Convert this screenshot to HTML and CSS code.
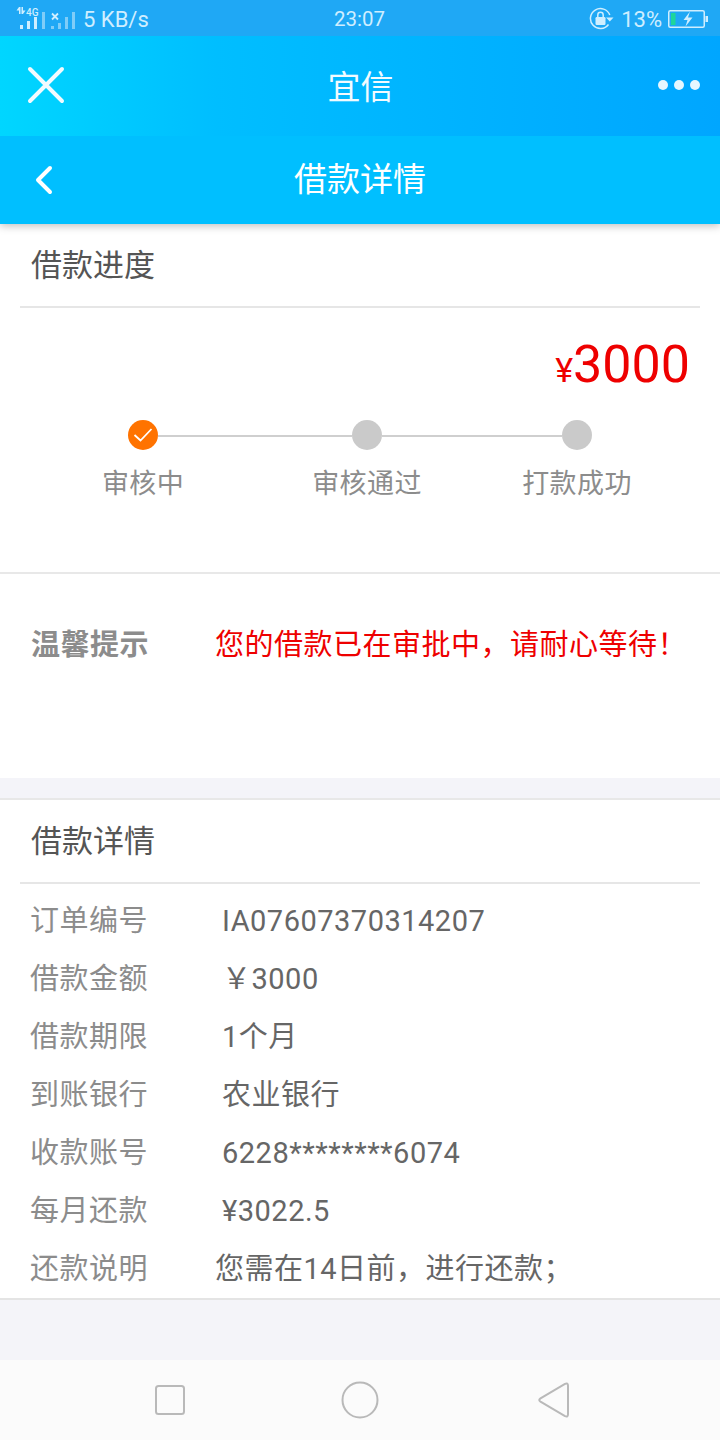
FILE: index.html
```html
<!DOCTYPE html>
<html lang="zh-CN">
<head>
<meta charset="utf-8">
<title>借款详情</title>
<link rel="stylesheet" href="styles.css">
</head>
<body>
<div class="screen">
  <header class="top">
    <div class="status">
      <div class="status-left">
        <svg class="sig" width="76" height="28" viewBox="0 0 76 28">
          <g fill="#cfeeff">
            <rect x="11" y="3" width="1.500" height="7"/><path d="M8.500 6.500l2.500-3.500v3.500z"/>
            <rect x="13.500" y="3" width="1.500" height="7"/><path d="M15 10l2.500-3.500H15z"/>
            <rect x="12" y="21" width="3" height="4"/>
            <rect x="19" y="17" width="3" height="8"/>
            <rect x="26" y="13" width="3" height="12"/>
          </g>
          <rect x="34" y="8" width="3" height="17" fill="#7fcdf8"/>
          <g fill="#7fcdf8">
            <rect x="43" y="22" width="3" height="3"/>
            <rect x="50" y="19" width="3" height="6"/>
            <rect x="57" y="13" width="3" height="12"/>
            <rect x="64" y="8" width="3" height="17"/>
          </g>
          <path d="M44 9.500l6 6M50 9.500l-6 6" stroke="#cfeeff" stroke-width="1.800" fill="none"/>
        </svg>
        <span class="g4">4G</span>
        <span>5 KB/s</span>
      </div>
      <span class="clock">23:07</span>
      <div class="status-right">
        <svg class="lock" width="25" height="24" viewBox="0 0 25 24">
          <path d="M19.500 17.500A10 10 0 1 1 20.800 8" fill="none" stroke="#cfeeff" stroke-width="1.500"/>
          <path d="M17 10.500h7.500l-3.700 4z" fill="#cfeeff"/>
          <rect x="6.500" y="10" width="10" height="8" rx="1.200" fill="#cfeeff"/>
          <path d="M8.800 10V8a2.700 2.700 0 0 1 5.400 0v2" fill="none" stroke="#cfeeff" stroke-width="1.500"/>
        </svg>
        <span class="pct">13%</span>
        <svg width="40" height="18" viewBox="0 0 40 18">
          <rect x=".75" y=".75" width="35.500" height="16.500" rx="1.500" fill="none" stroke="#cfeeff" stroke-width="1.500"/>
          <rect x="3" y="3" width="4.500" height="12" fill="#1fd59a"/>
          <rect x="37.500" y="6" width="2.500" height="6" fill="#cfeeff"/>
          <path d="M22 1.500l-6.500 8.500h4l-2 6.500 7-9h-4.500z" fill="#cfeeff"/>
        </svg>
      </div>
    </div>
    <div class="appbar">
      <svg class="close" width="38" height="38" viewBox="0 0 38 38">
        <path d="M3 3l32 32M35 3L3 35" stroke="#f2fbff" stroke-width="4" stroke-linecap="round" fill="none"/>
      </svg>
      <span class="app-title">宜信</span>
      <div class="dots"><i></i><i></i><i></i></div>
    </div>
    <div class="subbar">
      <svg class="back" width="20" height="30" viewBox="0 0 20 30">
        <path d="M17 3L5 15l12 12" stroke="#fff" stroke-width="4" stroke-linecap="round" stroke-linejoin="round" fill="none"/>
      </svg>
      <span class="sub-title">借款详情</span>
    </div>
  </header>

  <section class="card progress">
    <h2 class="head">借款进度</h2>
    <div class="amount"><span class="yen">¥</span>3000</div>
    <div class="track">
      <span class="dot done">
        <svg width="20" height="16" viewBox="0 0 20 16"><path d="M1.500 8l6 5.500L18.500 2" stroke="#fff" stroke-width="1.800" fill="none"/></svg>
      </span>
      <span class="link first"></span>
      <span class="dot"></span>
      <span class="link second"></span>
      <span class="dot"></span>
    </div>
    <div class="labels">
      <span class="lab a">审核中</span>
      <span class="lab b">审核通过</span>
      <span class="lab c">打款成功</span>
    </div>
  </section>

  <section class="tip">
    <strong class="tip-title">温馨提示</strong>
    <span class="tip-text">您的借款已在审批中，请耐心等待！</span>
  </section>

  <section class="card details">
    <h2 class="head">借款详情</h2>
    <dl class="rows">
      <div class="row"><dt>订单编号</dt><dd>IA07607370314207</dd></div>
      <div class="row"><dt>借款金额</dt><dd>￥3000</dd></div>
      <div class="row"><dt>借款期限</dt><dd>1个月</dd></div>
      <div class="row"><dt>到账银行</dt><dd>农业银行</dd></div>
      <div class="row"><dt>收款账号</dt><dd>6228********6074</dd></div>
      <div class="row"><dt>每月还款</dt><dd>¥3022.5</dd></div>
      <div class="row"><dt>还款说明</dt><dd class="note">您需在14日前，进行还款；</dd></div>
    </dl>
  </section>

  <div class="spacer"></div>

  <nav class="navbar">
    <svg class="nav-square" width="32" height="32" viewBox="0 0 32 32"><rect x="2" y="2" width="28" height="28" rx="2.500" fill="none" stroke="#b9b9b9" stroke-width="2"/></svg>
    <svg class="nav-circle" width="38" height="38" viewBox="0 0 38 38"><circle cx="19" cy="19" r="17.500" fill="none" stroke="#b9b9b9" stroke-width="2"/></svg>
    <svg class="nav-back" width="32" height="36" viewBox="0 0 32 36"><path d="M2.500 16.300L27 1.800q3-1.300 3 2v28.400q0 3.300-3 2L2.500 19.700q-2.500-1.700 0-3.400z" fill="none" stroke="#b9b9b9" stroke-width="2"/></svg>
  </nav>
</div>
</body>
</html>
```
FILE: styles.css
```css
* { box-sizing: border-box; }
html, body { margin: 0; padding: 0; }
body { font-family: Roboto, "Noto Sans CJK SC", sans-serif; background: #f4f4f9; }
.screen { width: 720px; height: 1440px; display: flex; flex-direction: column; overflow: hidden; }

.top { position: relative; z-index: 1; box-shadow: 0 2px 8px rgba(0,0,0,.25); }
.status { height: 36px; background: #1fa8f5; color: #cfeeff; font-size: 22px; display: grid; grid-template-columns: 1fr auto 1fr; align-items: center; padding: 2px 12px 0 8px; }
.status-left { display: flex; align-items: center; position: relative; }
.sig { display: block; margin-top: -3px; margin-right: -1px; }
.g4 { position: absolute; left: 18px; top: 0; font-size: 10px; line-height: 11px; font-weight: 500; }
.clock { font-size: 20.500px; margin-left: 3px; }
.status-right { display: flex; justify-content: flex-end; align-items: center; }
.lock { display: block; margin-right: 7px; }
.pct { margin-right: 6px; }
.appbar { height: 100px; background: linear-gradient(90deg, #00d6ff 0%, #00beff 30%, #00a6ff 100%); display: flex; align-items: center; justify-content: space-between; padding: 0 20px 2px 27px; }
.close { display: block; }
.app-title { color: #f2fbff; font-size: 33px; margin-right: 2px; }
.dots { display: flex; gap: 6px; }
.dots i { width: 10px; height: 10px; border-radius: 50%; background: #e6f6ff; display: block; }
.subbar { height: 88px; background: #00bfff; display: grid; grid-template-columns: 1fr auto 1fr; align-items: center; color: #fff; }
.back { display: block; margin-left: 33px; margin-bottom: 1px; }
.sub-title { font-size: 33px; margin-bottom: 7px; }

.card, .tip { background: #fff; }
.head { margin: 0 20px; padding: 0 11px; height: 84px; line-height: 84px; font-size: 31px; font-weight: 400; color: #555; border-bottom: 2px solid #e6e6e6; }
.progress { height: 350px; border-bottom: 2px solid #e8e8e8; }
.amount { text-align: right; color: #ee0000; font-size: 52px; line-height: 60px; margin-top: 27px; padding-right: 30px; }
.yen { font-size: 34px; }
.track { display: flex; align-items: center; margin-top: 20px; padding-left: 128px; }
.dot { width: 30px; height: 30px; border-radius: 50%; background: #cacaca; display: flex; align-items: center; justify-content: center; flex: none; }
.dot.done { background: #ff7300; }
.link { height: 2px; background: #cfcfcf; display: block; margin-top: 2px; }
.link.first { width: 194px; }
.link.second { width: 180px; }
.labels { display: flex; margin-top: 14px; color: #8c8c8c; font-size: 27px; letter-spacing: .4px; line-height: 40px; }
.lab { display: block; text-align: center; }
.lab.a { margin-left: 83px; width: 120px; }
.lab.b { margin-left: 104px; width: 120px; }
.lab.c { margin-left: 90px; width: 120px; }

.tip { height: 204px; display: flex; padding: 51px 0 0 31px; line-height: 40px; }
.tip-title { width: 184px; font-size: 29px; letter-spacing: .5px; font-weight: 700; color: #8c8c8c; }
.tip-text { font-size: 29px; letter-spacing: .5px; color: #ee0000; white-space: nowrap; }

.details { margin-top: 20px; height: 502px; border-top: 2px solid #e8e8e8; border-bottom: 2px solid #e4e4e4; }
.rows { margin: 8px 0 0; padding: 0 0 0 30px; }
.row { display: flex; height: 58px; line-height: 58px; font-size: 29px; color: #8c8c8c; }
.row dt { width: 192px; letter-spacing: .5px; }
.row dd { margin: 0; color: #666; letter-spacing: .5px; }
.row dd.note { margin-left: -7px; }

.spacer { flex: 1; }
.navbar { height: 80px; background: #fbfbfb; display: flex; align-items: center; padding-left: 154px; }
.navbar svg { display: block; }
.nav-circle { margin-left: 155px; }
.nav-back { margin-left: 159px; }
```
